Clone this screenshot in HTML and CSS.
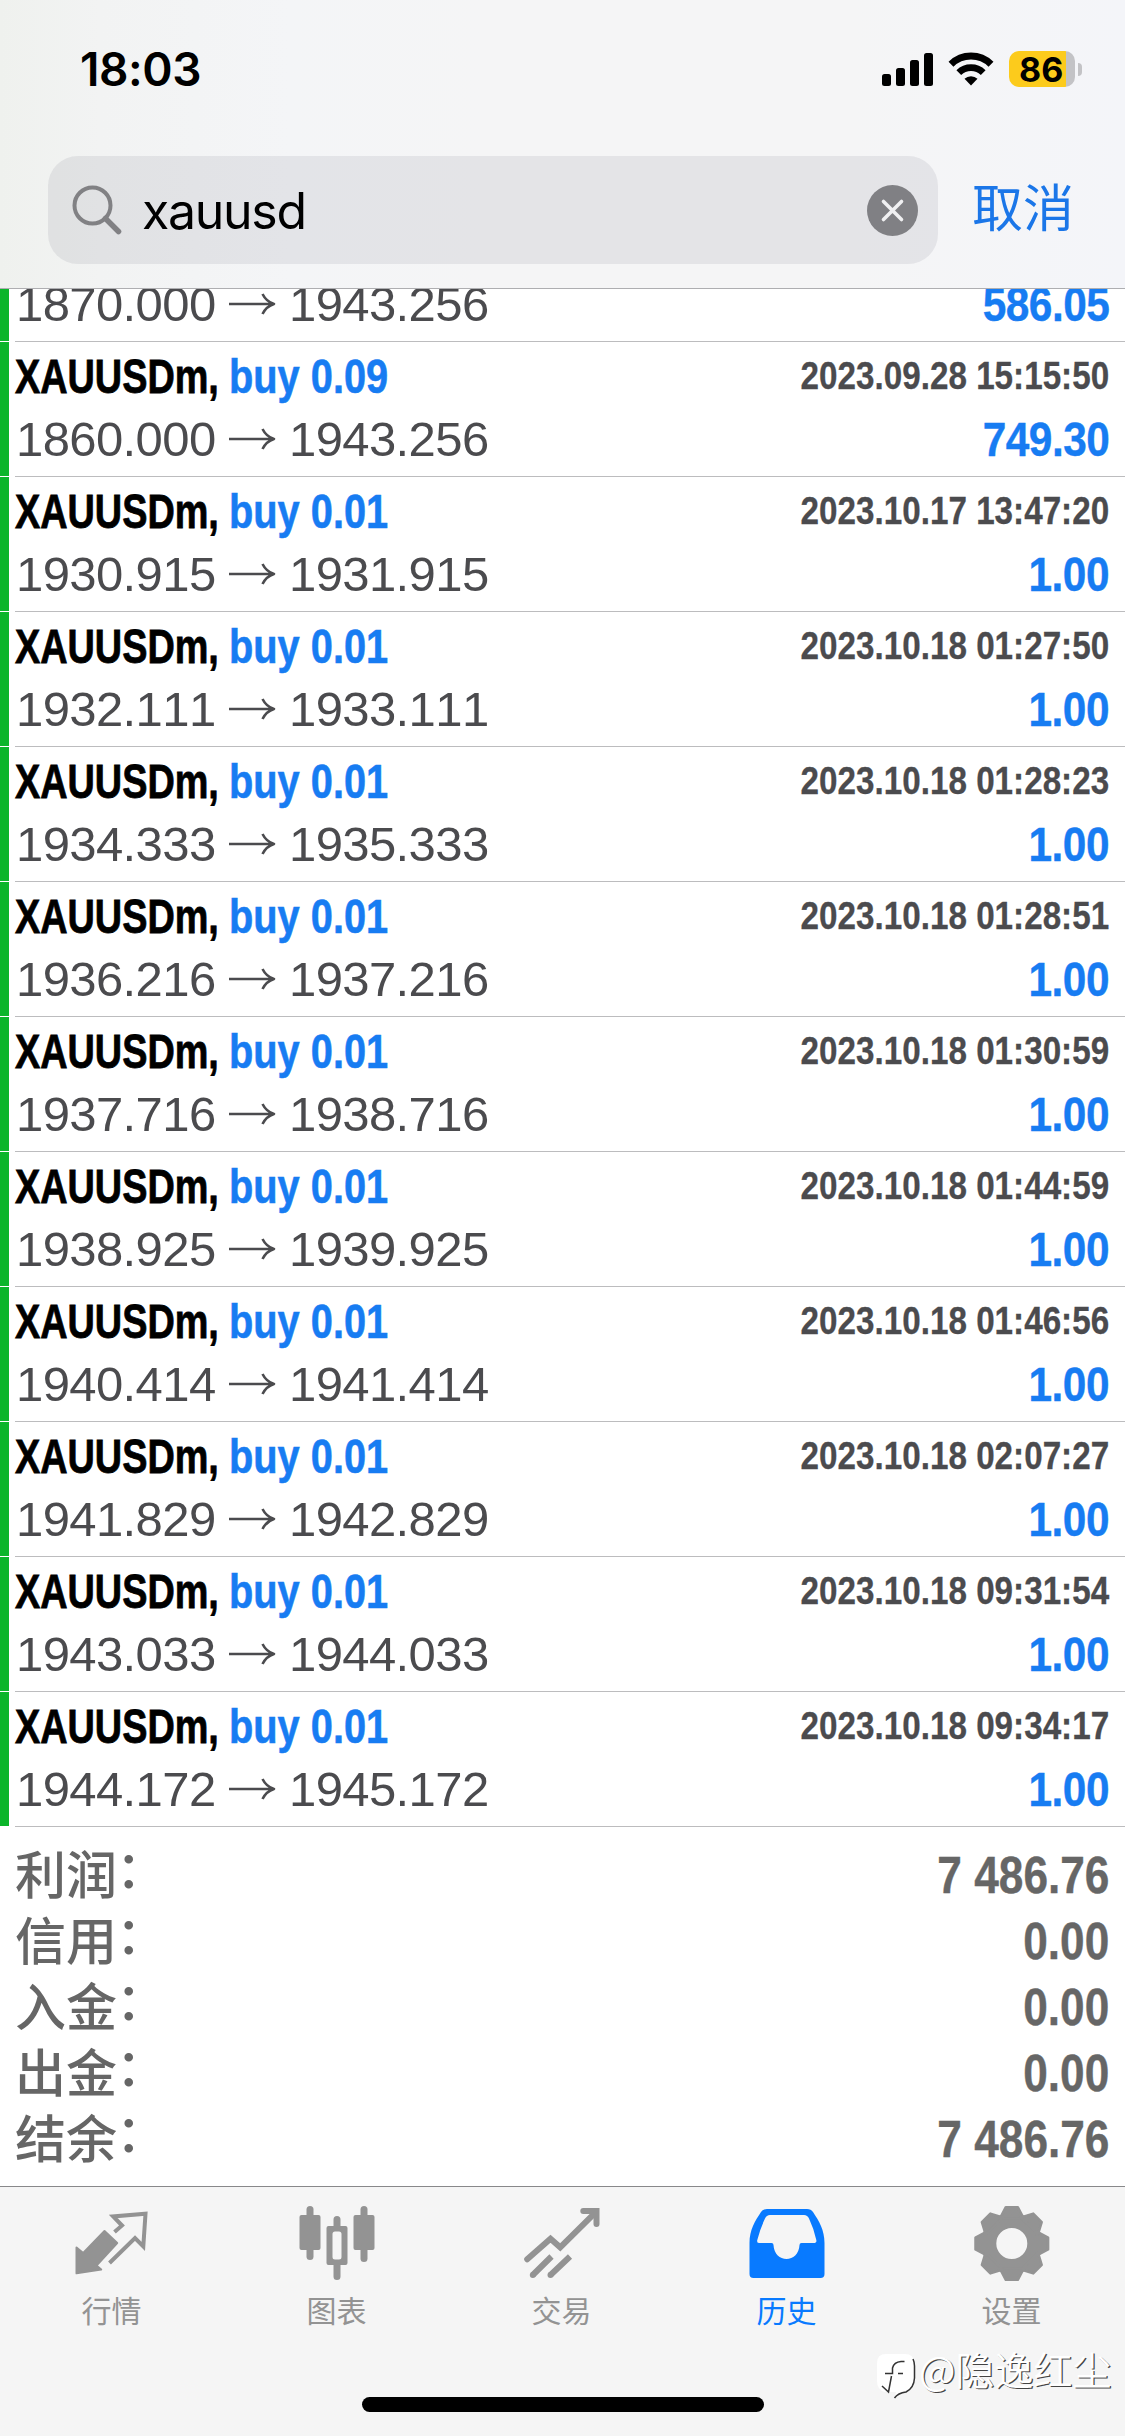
FILE: index.html
```html
<!DOCTYPE html>
<html lang="zh-CN">
<head>
<meta charset="utf-8">
<title>历史</title>
<link rel="stylesheet" href="styles.css">
</head>
<body>
<svg width="0" height="0" class="defs">
  <symbol id="arrow" viewBox="0 0 48 24"><path d="M1 12H45M34.500 2C37 7 41 10.500 46 12C41 13.500 37 17 34.500 22" fill="none" stroke="currentColor" stroke-width="2.600" stroke-linejoin="round"/></symbol>
</svg>
<div class="app">
  <header class="top">
    <div class="status">
      <span class="clock">18:03</span>
      <svg class="signal" viewBox="0 0 51 33"><rect y="21" width="9" height="12" rx="2.500"/><rect x="14" y="15" width="9" height="18" rx="2.500"/><rect x="28" y="7" width="9" height="26" rx="2.500"/><rect x="42" width="9" height="33" rx="2.500"/></svg>
      <svg class="wifi" viewBox="0 0 46 34"><path d="M3 12.200A28.500 28.500 0 0 1 43 12.200" fill="none" stroke="#000" stroke-width="7"/><path d="M10.800 20.600A17.500 17.500 0 0 1 35.200 20.600" fill="none" stroke="#000" stroke-width="6.800"/><path d="M16.500 26.800A9.500 9.500 0 0 1 29.500 26.800L23 33.500Z"/></svg>
      <div class="battery"><span>86</span></div>
      <i class="nub"></i>
    </div>
    <div class="search">
      <div class="field">
        <svg class="glass" viewBox="0 0 50 50" fill="none" stroke="#818184"><circle cx="20.500" cy="20.500" r="18" stroke-width="4"/><path d="M33.500 33.500L46.500 46.500" stroke-width="5.500" stroke-linecap="round"/></svg>
        <span class="query">xauusd</span>
        <svg class="clear" viewBox="0 0 51 51"><circle cx="25.500" cy="25.500" r="25.500" fill="#808084"/><path d="M16.500 16.500L34.500 34.500M34.500 16.500L16.500 34.500" stroke="#f0f0f2" stroke-width="3.600" stroke-linecap="round"/></svg>
      </div>
      <span class="cancel">取消</span>
    </div>
  </header>
  <main class="deals">
    <div class="row partial"><i class="bar"></i><div class="deal"><div class="line prices"><span class="from">1870.000</span><svg class="arrow"><use href="#arrow"/></svg><span>1943.256</span><span class="profit">586.05</span></div></div></div>
    <div class="row"><i class="bar"></i><div class="deal"><div class="line title"><span class="sym">XAUUSDm,</span><span class="side">buy 0.09</span><span class="date">2023.09.28 15:15:50</span></div><div class="line prices"><span class="from">1860.000</span><svg class="arrow"><use href="#arrow"/></svg><span>1943.256</span><span class="profit">749.30</span></div></div></div>
    <div class="row"><i class="bar"></i><div class="deal"><div class="line title"><span class="sym">XAUUSDm,</span><span class="side">buy 0.01</span><span class="date">2023.10.17 13:47:20</span></div><div class="line prices"><span class="from">1930.915</span><svg class="arrow"><use href="#arrow"/></svg><span>1931.915</span><span class="profit">1.00</span></div></div></div>
    <div class="row"><i class="bar"></i><div class="deal"><div class="line title"><span class="sym">XAUUSDm,</span><span class="side">buy 0.01</span><span class="date">2023.10.18 01:27:50</span></div><div class="line prices"><span class="from">1932.111</span><svg class="arrow"><use href="#arrow"/></svg><span>1933.111</span><span class="profit">1.00</span></div></div></div>
    <div class="row"><i class="bar"></i><div class="deal"><div class="line title"><span class="sym">XAUUSDm,</span><span class="side">buy 0.01</span><span class="date">2023.10.18 01:28:23</span></div><div class="line prices"><span class="from">1934.333</span><svg class="arrow"><use href="#arrow"/></svg><span>1935.333</span><span class="profit">1.00</span></div></div></div>
    <div class="row"><i class="bar"></i><div class="deal"><div class="line title"><span class="sym">XAUUSDm,</span><span class="side">buy 0.01</span><span class="date">2023.10.18 01:28:51</span></div><div class="line prices"><span class="from">1936.216</span><svg class="arrow"><use href="#arrow"/></svg><span>1937.216</span><span class="profit">1.00</span></div></div></div>
    <div class="row"><i class="bar"></i><div class="deal"><div class="line title"><span class="sym">XAUUSDm,</span><span class="side">buy 0.01</span><span class="date">2023.10.18 01:30:59</span></div><div class="line prices"><span class="from">1937.716</span><svg class="arrow"><use href="#arrow"/></svg><span>1938.716</span><span class="profit">1.00</span></div></div></div>
    <div class="row"><i class="bar"></i><div class="deal"><div class="line title"><span class="sym">XAUUSDm,</span><span class="side">buy 0.01</span><span class="date">2023.10.18 01:44:59</span></div><div class="line prices"><span class="from">1938.925</span><svg class="arrow"><use href="#arrow"/></svg><span>1939.925</span><span class="profit">1.00</span></div></div></div>
    <div class="row"><i class="bar"></i><div class="deal"><div class="line title"><span class="sym">XAUUSDm,</span><span class="side">buy 0.01</span><span class="date">2023.10.18 01:46:56</span></div><div class="line prices"><span class="from">1940.414</span><svg class="arrow"><use href="#arrow"/></svg><span>1941.414</span><span class="profit">1.00</span></div></div></div>
    <div class="row"><i class="bar"></i><div class="deal"><div class="line title"><span class="sym">XAUUSDm,</span><span class="side">buy 0.01</span><span class="date">2023.10.18 02:07:27</span></div><div class="line prices"><span class="from">1941.829</span><svg class="arrow"><use href="#arrow"/></svg><span>1942.829</span><span class="profit">1.00</span></div></div></div>
    <div class="row"><i class="bar"></i><div class="deal"><div class="line title"><span class="sym">XAUUSDm,</span><span class="side">buy 0.01</span><span class="date">2023.10.18 09:31:54</span></div><div class="line prices"><span class="from">1943.033</span><svg class="arrow"><use href="#arrow"/></svg><span>1944.033</span><span class="profit">1.00</span></div></div></div>
    <div class="row"><i class="bar"></i><div class="deal"><div class="line title"><span class="sym">XAUUSDm,</span><span class="side">buy 0.01</span><span class="date">2023.10.18 09:34:17</span></div><div class="line prices"><span class="from">1944.172</span><svg class="arrow"><use href="#arrow"/></svg><span>1945.172</span><span class="profit">1.00</span></div></div></div>
  </main>
  <section class="summary">
    <div class="total"><span>利润<i class="colon">：</i></span><b>7 486.76</b></div>
    <div class="total"><span>信用<i class="colon">：</i></span><b>0.00</b></div>
    <div class="total"><span>入金<i class="colon">：</i></span><b>0.00</b></div>
    <div class="total"><span>出金<i class="colon">：</i></span><b>0.00</b></div>
    <div class="total"><span>结余<i class="colon">：</i></span><b>7 486.76</b></div>
  </section>
  <footer class="bottom">
    <nav class="tabs">
      <div class="tab">
        <svg viewBox="0 0 84 84"><path d="M6.500 45.500L13.200 51L34.500 29L47.200 41L26.500 63.500L31.200 67.500L6.500 71.300Z" fill="currentColor" stroke="currentColor" stroke-width="2" stroke-linejoin="round"/><path d="M44.500 30L52 23.500L43.200 14.500L75.500 11.800L73.300 44.500L65 36L39.500 61" fill="none" stroke="currentColor" stroke-width="4"/></svg>
        <span>行情</span>
      </div>
      <div class="tab">
        <svg viewBox="0 0 84 84" fill="currentColor"><rect x="4.500" y="13" width="21" height="35" rx="2"/><rect x="11.500" y="4" width="7" height="54" rx="3.500"/><path fill-rule="evenodd" d="M33.500 24H50.500Q52.500 24 52.500 26V61Q52.500 63 50.500 63H33.500Q31.500 63 31.500 61V26Q31.500 24 33.500 24ZM40 29.500Q37.500 29.500 37.500 32V55Q37.500 57.500 40 57.500H44Q46.500 57.500 46.500 55V32Q46.500 29.500 44 29.500Z"/><path d="M38.500 25V17.500A3.500 3.500 0 0 1 45.500 17.500V25ZM38.500 62V74.500A3.500 3.500 0 0 0 45.500 74.500V62Z"/><rect x="58.500" y="13" width="21" height="35" rx="2"/><rect x="65.500" y="4" width="7" height="56" rx="3.500"/></svg>
        <span>图表</span>
      </div>
      <div class="tab">
        <svg viewBox="0 0 84 84" fill="none" stroke="currentColor" stroke-width="6"><path d="M7.200 57.300L30.500 36.800L40.200 45.300L75.500 10.300" stroke-linecap="round"/><path d="M63.300 9H76.500V22" stroke-linecap="round"/><path d="M12.800 73L31.500 54.500M30.500 73L50 54.500"/><g fill="currentColor" stroke="none"><circle cx="12.800" cy="73" r="3"/><circle cx="30.500" cy="73" r="3"/></g></svg>
        <span>交易</span>
      </div>
      <div class="tab active">
        <svg viewBox="0 0 84 84"><path fill="currentColor" fill-rule="evenodd" d="M22 7H62Q66 7 68 10C74 19 79.500 28 79.500 41V72Q79.500 76 75.500 76H8.500Q4.500 76 4.500 72V41C4.500 28 10 19 16 10Q18 7 22 7ZM25 13Q21.500 13 20 16.500Q15 27 12.300 38Q11.500 41 14.500 41H26.500Q28.500 41 28.500 43C29 52 35 57 41.500 57C48 57 54 52 54.500 43Q54.500 41 56.500 41H68.500Q72 41 71.300 38Q69 27 64 16.500Q62.500 13 59 13Z"/></svg>
        <span>历史</span>
      </div>
      <div class="tab">
        <svg viewBox="0 0 84 84"><defs><path id="tooth" d="M-6 -36.300H6L12 -25H-12Z" fill="currentColor" stroke="currentColor" stroke-width="2.500" stroke-linejoin="round"/></defs><g transform="translate(41.800 41.500)"><circle r="23" fill="none" stroke="currentColor" stroke-width="15"/><use href="#tooth"/><use href="#tooth" transform="rotate(45)"/><use href="#tooth" transform="rotate(90)"/><use href="#tooth" transform="rotate(135)"/><use href="#tooth" transform="rotate(180)"/><use href="#tooth" transform="rotate(225)"/><use href="#tooth" transform="rotate(270)"/><use href="#tooth" transform="rotate(315)"/></g></svg>
        <span>设置</span>
      </div>
    </nav>
    <div class="home"></div>
  </footer>
  <div class="mark">
    <svg viewBox="0 0 42 46"><path d="M11 3H30Q39 3 39 12V28Q39 38 29 40L20 46L21 41H10Q2 39 2 30V12Q2 3 11 3Z" fill="#fff"/><path d="M38 8Q39.500 11 39.500 15V27Q39 37 31 41Q23 42 19.500 47" fill="none" stroke="#333" stroke-width="1.500"/><path d="M29.500 10.500H26Q19 11 17.500 17V22.500H10M23 22.500H28M16.500 25L13.500 41L7 35" fill="none" stroke="#333" stroke-width="1.500"/></svg>
    <span>@隐逸红尘</span>
  </div>
</div>
</body>
</html>
```
FILE: styles.css
```css
* { box-sizing: border-box; }
body { margin: 0; background: #fff; font-family: "Liberation Sans", "Noto Sans CJK SC", sans-serif; font-kerning: none; }
.defs { position: absolute; }
.app { position: relative; width: 1125px; height: 2436px; overflow: hidden; display: flex; flex-direction: column; }

.top { height: 289px; flex: none; border-bottom: 1px solid #aeaeb1; background: linear-gradient(90deg, #eff1ee 0, #f2f3f3 100px, #f4f5f7 290px, #f5f5f6 480px, #f5f5f6 850px, #f4f5f9 1125px); }
.status { height: 156px; display: flex; align-items: flex-start; padding: 51px 43px 0 80px; }
.clock { font: 600 46px/36px Inter, sans-serif; letter-spacing: -0.4px; margin-right: auto; }
.signal { width: 51px; height: 33px; margin: 2px 15px 0 0; }
.wifi { width: 46px; height: 34px; margin: 1px 15px 0 0; }
.battery { width: 66px; height: 36px; border-radius: 10px; background: linear-gradient(90deg, #fccb1c 57px, #c3c3c6 57px); font: 700 34px/37px Inter, sans-serif; padding-left: 10px; }
.nub { width: 4px; height: 13px; margin: 12px 0 0 3px; border-radius: 0 5px 5px 0; background: #c3c3c6; }
.search { display: flex; align-items: center; padding-left: 48px; height: 108px; }
.field { width: 890px; height: 108px; border-radius: 30px; background: rgba(118, 118, 128, 0.13); display: flex; align-items: center; padding: 0 20px 0 24px; }
.glass { width: 50px; height: 50px; }
.query { font: 400 50px/60px Inter, sans-serif; margin: 2px 0 0 20px; flex: 1; letter-spacing: -1.300px; }
.clear { width: 51px; height: 51px; }
.cancel { font: 400 51px/60px "Noto Sans CJK SC", sans-serif; color: #1b76e8; margin: -10px 0 0 34px; }

.deals { height: 1538px; flex: none; overflow: hidden; display: flex; flex-direction: column; justify-content: flex-end; }
.row { flex: none; height: 135px; display: grid; grid-template-columns: 9px 1fr; column-gap: 6px; }
.bar { height: 134px; background: #0bb52a; }
.partial { height: 53px; }
.partial .bar { height: 52px; }
.partial .deal { padding-top: 0; margin-top: -16px; }
.deal { border-bottom: 1px solid #bcbcbe; padding: 3px 16px 0 0; }
.line { display: flex; height: 62px; line-height: 62px; font-size: 49px; align-items: baseline; white-space: nowrap; }
.title { height: 63px; }
.sym { width: 214px; font-weight: 700; color: #000; transform: scaleX(0.772); transform-origin: left; -webkit-text-stroke: 0.8px #000; }
.side { font-weight: 700; color: #177cf2; transform: scaleX(0.812); transform-origin: left; -webkit-text-stroke: 0.6px #177cf2; }
.date { margin-left: auto; font-weight: 700; font-size: 39px; color: #4b4b4e; transform: scaleX(0.852) translateY(-4px); transform-origin: right; -webkit-text-stroke: 0.3px #4b4b4e; }
.prices { color: #4b4b4e; letter-spacing: -0.6px; }
.from { width: 213px; margin-left: 1px; }
.arrow { width: 48px; height: 24px; margin-right: 13px; margin-left: -1px; align-self: center; }
.profit { margin-left: auto; font-weight: 700; color: #177cf2; transform: scaleX(0.865); transform-origin: right; -webkit-text-stroke: 0.4px #177cf2; }

.summary { height: 359px; flex: none; padding: 15px 16px 0 15px; color: #666; }
.total { height: 66px; display: flex; justify-content: space-between; font-size: 52px; line-height: 66px; }
.total span { font: 500 51px/66px "Noto Sans CJK SC", sans-serif; margin-top: -3px; }
.colon { font-style: normal; position: relative; top: -6px; left: -1px; }
.total b { transform: scaleX(0.85); transform-origin: right; -webkit-text-stroke: 0.4px #666; }

.bottom { flex: 1; background: #f5f5f5; border-top: 1px solid #88888a; display: flex; flex-direction: column; align-items: center; }
.tabs { display: grid; grid-template-columns: repeat(5, 225px); margin-left: -2px; padding-top: 15px; height: 210px; }
.tab { display: flex; flex-direction: column; align-items: center; color: #939393; font: 400 30px/40px "Noto Sans CJK SC", sans-serif; }
.tab svg { width: 84px; height: 84px; margin-bottom: 3px; }
.active { color: #087aff; }
.home { width: 402px; height: 15px; border-radius: 8px; background: #000; }

.mark { position: absolute; left: 875px; top: 2351px; display: flex; align-items: flex-start; color: #fff; }
.mark svg { width: 42px; height: 46px; margin-right: 2px; overflow: visible; }
.mark span { font: 350 39px/46px "Noto Sans CJK SC", sans-serif; margin-top: -6px; text-shadow: 1.200px 1.200px 0.500px #444; }
```
